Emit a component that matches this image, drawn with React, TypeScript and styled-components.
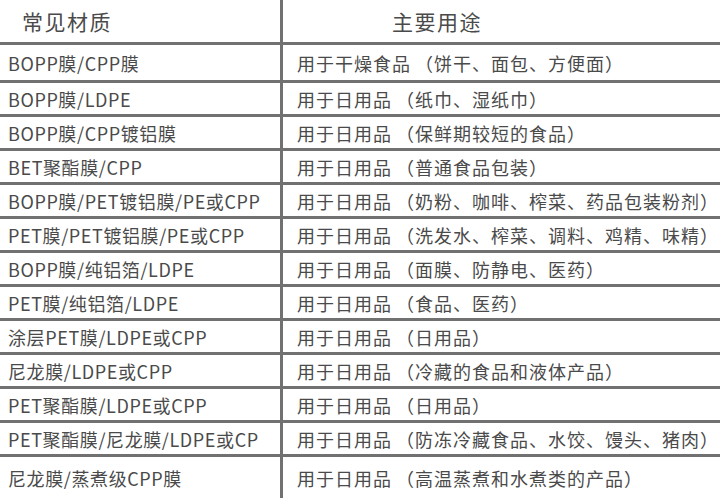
import React from 'react';
import styled, { createGlobalStyle } from 'styled-components';

const GlobalStyle = createGlobalStyle`
  html, body {
    margin: 0;
    padding: 0;
    background: #ffffff;
  }
  body {
    font-family: "Noto Sans CJK SC", "Noto Sans", sans-serif;
    color: #4a4a4a;
  }
`;

const Table = styled.div`
  width: 720px;
  height: 498px;
  display: flex;
  flex-direction: column;
  overflow: hidden;
`;

const Row = styled.div<{ $h: number; $last?: boolean }>`
  display: grid;
  grid-template-columns: 283px 1fr;
  height: ${(p) => p.$h}px;
  flex: ${(p) => (p.$last ? '1 0 auto' : '0 0 auto')};
  border-bottom: ${(p) => (p.$last ? 'none' : '3px solid #717171')};
`;

const Cell = styled.div<{ $left?: boolean; $head?: boolean; $pad: number }>`
  display: flex;
  align-items: center;
  padding-left: ${(p) => p.$pad}px;
  border-right: ${(p) => (p.$left ? '3px solid #717171' : 'none')};
  font-size: ${(p) => (p.$head ? 21 : 18)}px;
  letter-spacing: ${(p) => (p.$head ? 1.5 : p.$left ? 0.6 : 1)}px;
  white-space: nowrap;
  overflow: hidden;
`;

const Note = styled.span`
  margin-left: 4px;
`;

const rows: [string, string, string][] = [
  ['BOPP膜/CPP膜', '用于干燥食品', '（饼干、面包、方便面）'],
  ['BOPP膜/LDPE', '用于日用品', '（纸巾、湿纸巾）'],
  ['BOPP膜/CPP镀铝膜', '用于日用品', '（保鲜期较短的食品）'],
  ['BET聚酯膜/CPP', '用于日用品', '（普通食品包装）'],
  ['BOPP膜/PET镀铝膜/PE或CPP', '用于日用品', '（奶粉、咖啡、榨菜、药品包装粉剂）'],
  ['PET膜/PET镀铝膜/PE或CPP', '用于日用品', '（洗发水、榨菜、调料、鸡精、味精）'],
  ['BOPP膜/纯铝箔/LDPE', '用于日用品', '（面膜、防静电、医药）'],
  ['PET膜/纯铝箔/LDPE', '用于日用品', '（食品、医药）'],
  ['涂层PET膜/LDPE或CPP', '用于日用品', '（日用品）'],
  ['尼龙膜/LDPE或CPP', '用于日用品', '（冷藏的食品和液体产品）'],
  ['PET聚酯膜/LDPE或CPP', '用于日用品', '（日用品）'],
  ['PET聚酯膜/尼龙膜/LDPE或CP', '用于日用品', '（防冻冷藏食品、水饺、馒头、猪肉）'],
  ['尼龙膜/蒸煮级CPP膜', '用于日用品', '（高温蒸煮和水煮类的产品）'],
];

const App: React.FC = () => {
  return (
    <>
      <GlobalStyle />
      <Table>
        <Row $h={42}>
          <Cell $left $head $pad={22}>常见材质</Cell>
          <Cell $head $pad={109}>主要用途</Cell>
        </Row>
        {rows.map(([material, usage, note], i) => (
          <Row key={i} $h={i === 0 ? 35 : 31} $last={i === rows.length - 1}>
            <Cell $left $pad={8}>{material}</Cell>
            <Cell $pad={14}>
              {usage}
              <Note>{note}</Note>
            </Cell>
          </Row>
        ))}
      </Table>
    </>
  );
};

export default App;
